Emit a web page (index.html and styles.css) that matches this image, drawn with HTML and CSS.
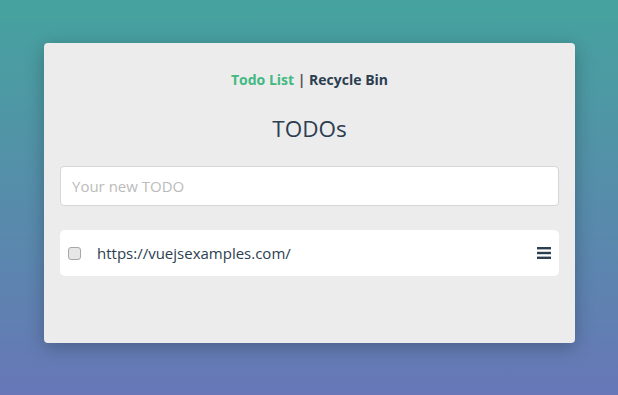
FILE: index.html
```html
<!DOCTYPE html>
<html lang="en">

<head>
    <meta charset="UTF-8" />
    <title>TODOs</title>
    <link rel="stylesheet" href="styles.css">
</head>

<body>
    <div class="card">
        <nav class="nav">
            <a class="active" href="#">Todo List</a> | <a href="#">Recycle Bin</a>
        </nav>

        <h1>TODOs</h1>

        <input type="text" class="new-todo" placeholder="Your new TODO" />

        <ul class="todos">
            <li class="todo">
                <input type="checkbox" />
                <span class="todo-text">https://vuejsexamples.com/</span>
                <span class="handle">
                    <svg width="14" height="12" viewBox="0 0 14 12">
                        <rect x="0" y="0" width="14" height="2.4" fill="#2c3e50" />
                        <rect x="0" y="4.8" width="14" height="2.4" fill="#2c3e50" />
                        <rect x="0" y="9.6" width="14" height="2.4" fill="#2c3e50" />
                    </svg>
                </span>
            </li>
        </ul>
    </div>
</body>

</html>
```

FILE: styles.css
```css
body {
    margin: 0;
    height: 395px;
    padding: 43px 43px 0 44px;
    box-sizing: border-box;
    background: linear-gradient(to bottom, #45a39e, #6777b7);
    font-family: "Open Sans", "Segoe UI", sans-serif;
    color: #2c3e50;
}

.card {
    width: 531px;
    height: 300px;
    box-sizing: border-box;
    background: #ececec;
    border-radius: 4px;
    box-shadow: 0 4px 18px rgba(0, 0, 0, 0.25);
    padding: 27px 16px 0;
}

.nav {
    text-align: center;
    font-size: 14px;
    font-weight: 700;
    color: #555;
    line-height: 20px;
}

.nav a {
    color: #2c3e50;
    text-decoration: none;
}

.nav a.active {
    color: #42b983;
}

h1 {
    margin: 24px 0 0;
    text-align: center;
    font-size: 22.5px;
    font-weight: 400;
    line-height: 30px;
    color: #2c3e50;
}

.new-todo {
    display: block;
    width: 100%;
    height: 40px;
    margin-top: 22px;
    padding: 0 11px;
    box-sizing: border-box;
    border: 1px solid #d6d6d6;
    border-radius: 4px;
    font-family: inherit;
    font-size: 15px;
    color: #2c3e50;
    background: white;
}

.new-todo::placeholder {
    color: #bbb;
}

.todos {
    list-style: none;
    margin: 24px 0 0;
    padding: 0;
}

.todo {
    display: flex;
    align-items: center;
    height: 46px;
    padding: 0 8px;
    background: white;
    border-radius: 5px;
}

/* grey checkbox like the Windows one */
.todo input {
    appearance: none;
    margin: 0;
    width: 13px;
    height: 13px;
    border: 1px solid #a8a8a8;
    border-radius: 3px;
    background: #e6e6e6;
    box-sizing: border-box;
}

.todo-text {
    flex: 1;
    margin-left: 16px;
    font-size: 15px;
}

.handle {
    display: flex;
}
```
